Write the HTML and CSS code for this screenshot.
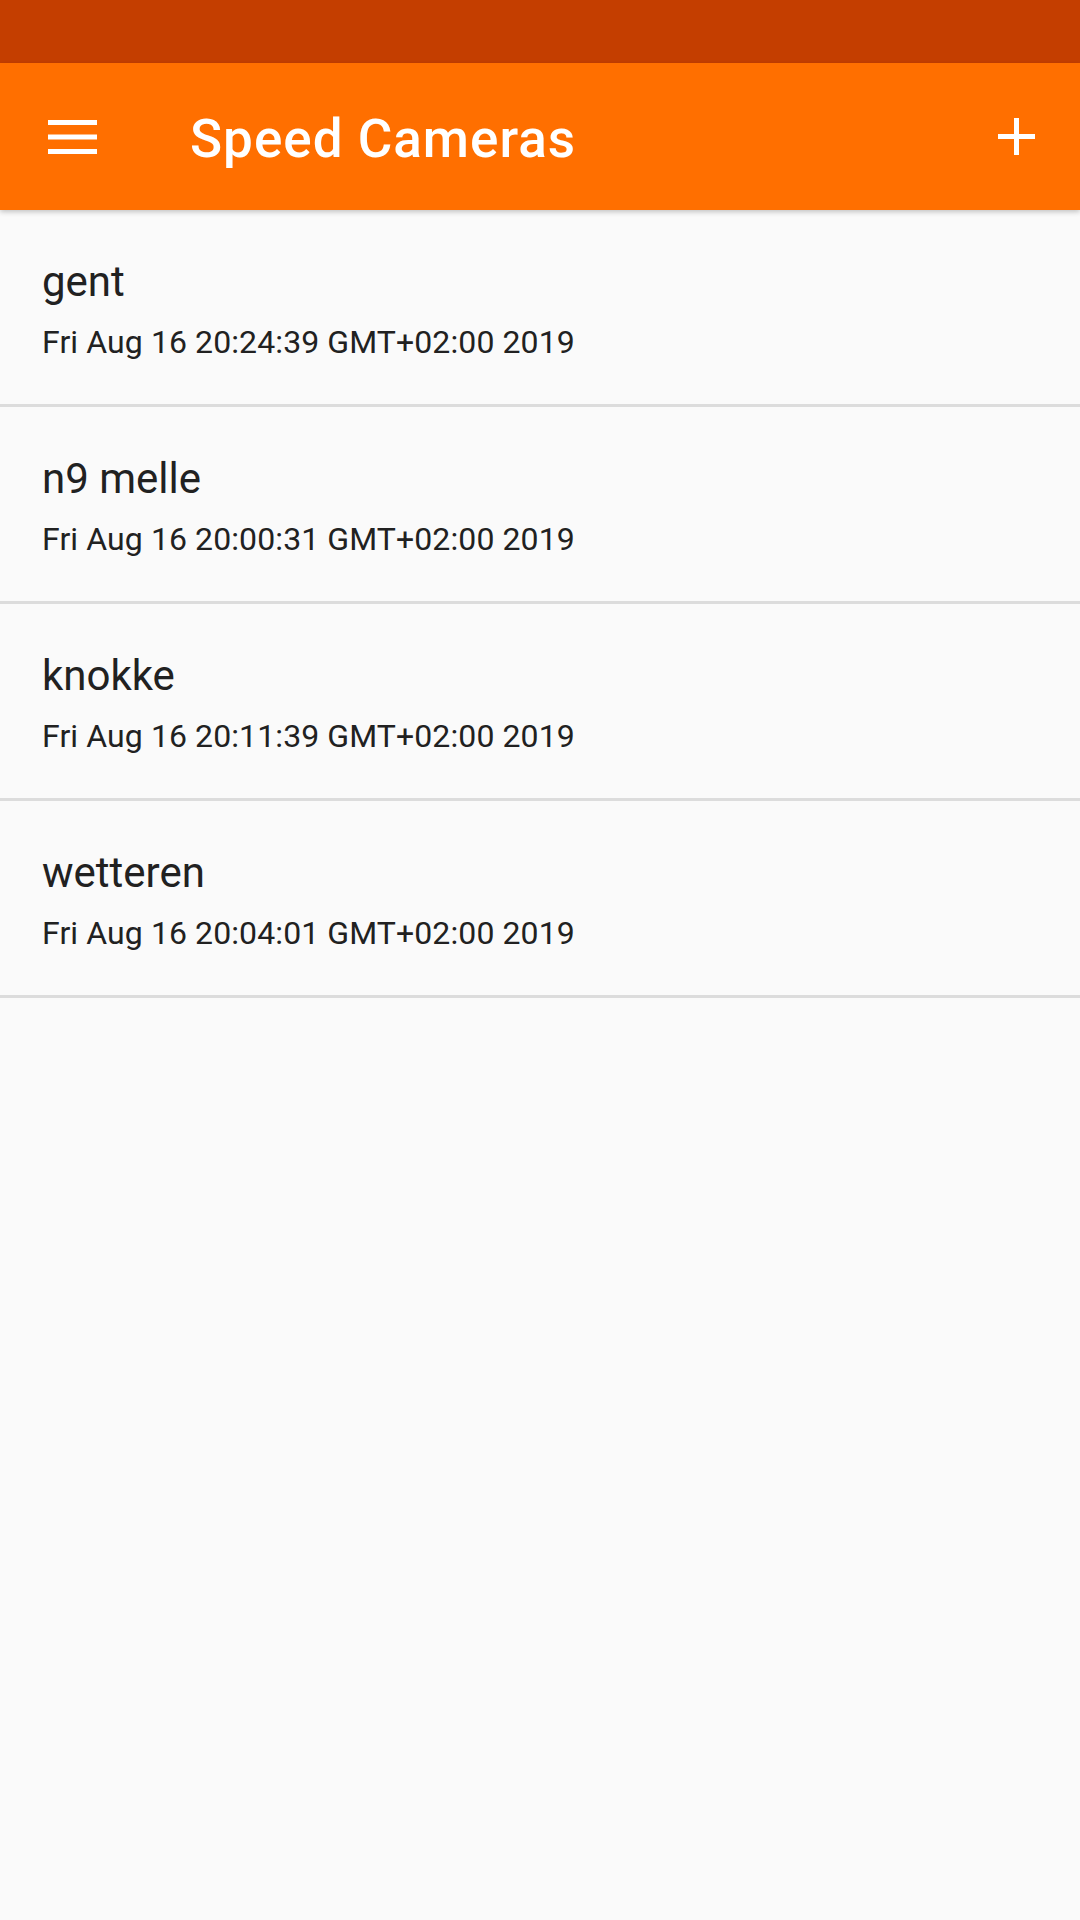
FILE: index.html
```html
<!DOCTYPE html>
<html>
<head>
<meta charset="utf-8">
<link rel="stylesheet" href="styles.css">
</head>
<body>
<div class="statusbar"></div>
<header class="toolbar">
  <svg class="menu" width="49" height="34" viewBox="0 0 49 34"><rect x="0" y="0" width="49" height="5" fill="#fff"/><rect x="0" y="14.5" width="49" height="5" fill="#fff"/><rect x="0" y="29" width="49" height="5" fill="#fff"/></svg>
  <h1 class="title">Speed Cameras</h1>
  <svg class="plus" width="37" height="37" viewBox="0 0 37 37"><rect x="16" y="0" width="5" height="37" fill="#fff"/><rect x="0" y="16" width="37" height="5" fill="#fff"/></svg>
</header>
<main class="list">
  <div class="row"><div class="name">gent</div><div class="date">Fri Aug 16 20:24:39 GMT+02:00 2019</div></div>
  <div class="row"><div class="name">n9 melle</div><div class="date">Fri Aug 16 20:00:31 GMT+02:00 2019</div></div>
  <div class="row"><div class="name">knokke</div><div class="date">Fri Aug 16 20:11:39 GMT+02:00 2019</div></div>
  <div class="row"><div class="name">wetteren</div><div class="date">Fri Aug 16 20:04:01 GMT+02:00 2019</div></div>
</main>
</body>
</html>
```
FILE: styles.css
```css
html, body {
  margin: 0;
  padding: 0;
}
body {
  width: 1080px;
  height: 1920px;
  background: #fafafa;
  font-family: Roboto, "Noto Sans", sans-serif;
  overflow: hidden;
}
.statusbar {
  height: 63px;
  background: #c43e00;
}
.toolbar {
  position: relative;
  z-index: 1;
  height: 147px;
  background: #ff6f00;
  display: flex;
  align-items: center;
  box-shadow: 0 2px 5px rgba(0,0,0,0.22);
}
.menu {
  margin-left: 48px;
  flex: none;
}
.title {
  margin: 6px 0 0 93px;
  font-size: 53px;
  font-weight: 500;
  color: #fff;
  letter-spacing: 1px;
  flex: 1;
  line-height: 1;
}
.plus {
  margin-right: 45px;
  flex: none;
}
.row {
  box-sizing: border-box;
  height: 197px;
  border-bottom: 3px solid #dcdcdc;
  padding: 47px 0 0 42px;
}
.name {
  font-size: 42px;
  line-height: 50px;
  color: #212121;
}
.date {
  margin-top: 15px;
  font-size: 32px;
  line-height: 40px;
  letter-spacing: 0.1px;
  color: #212121;
}
```
